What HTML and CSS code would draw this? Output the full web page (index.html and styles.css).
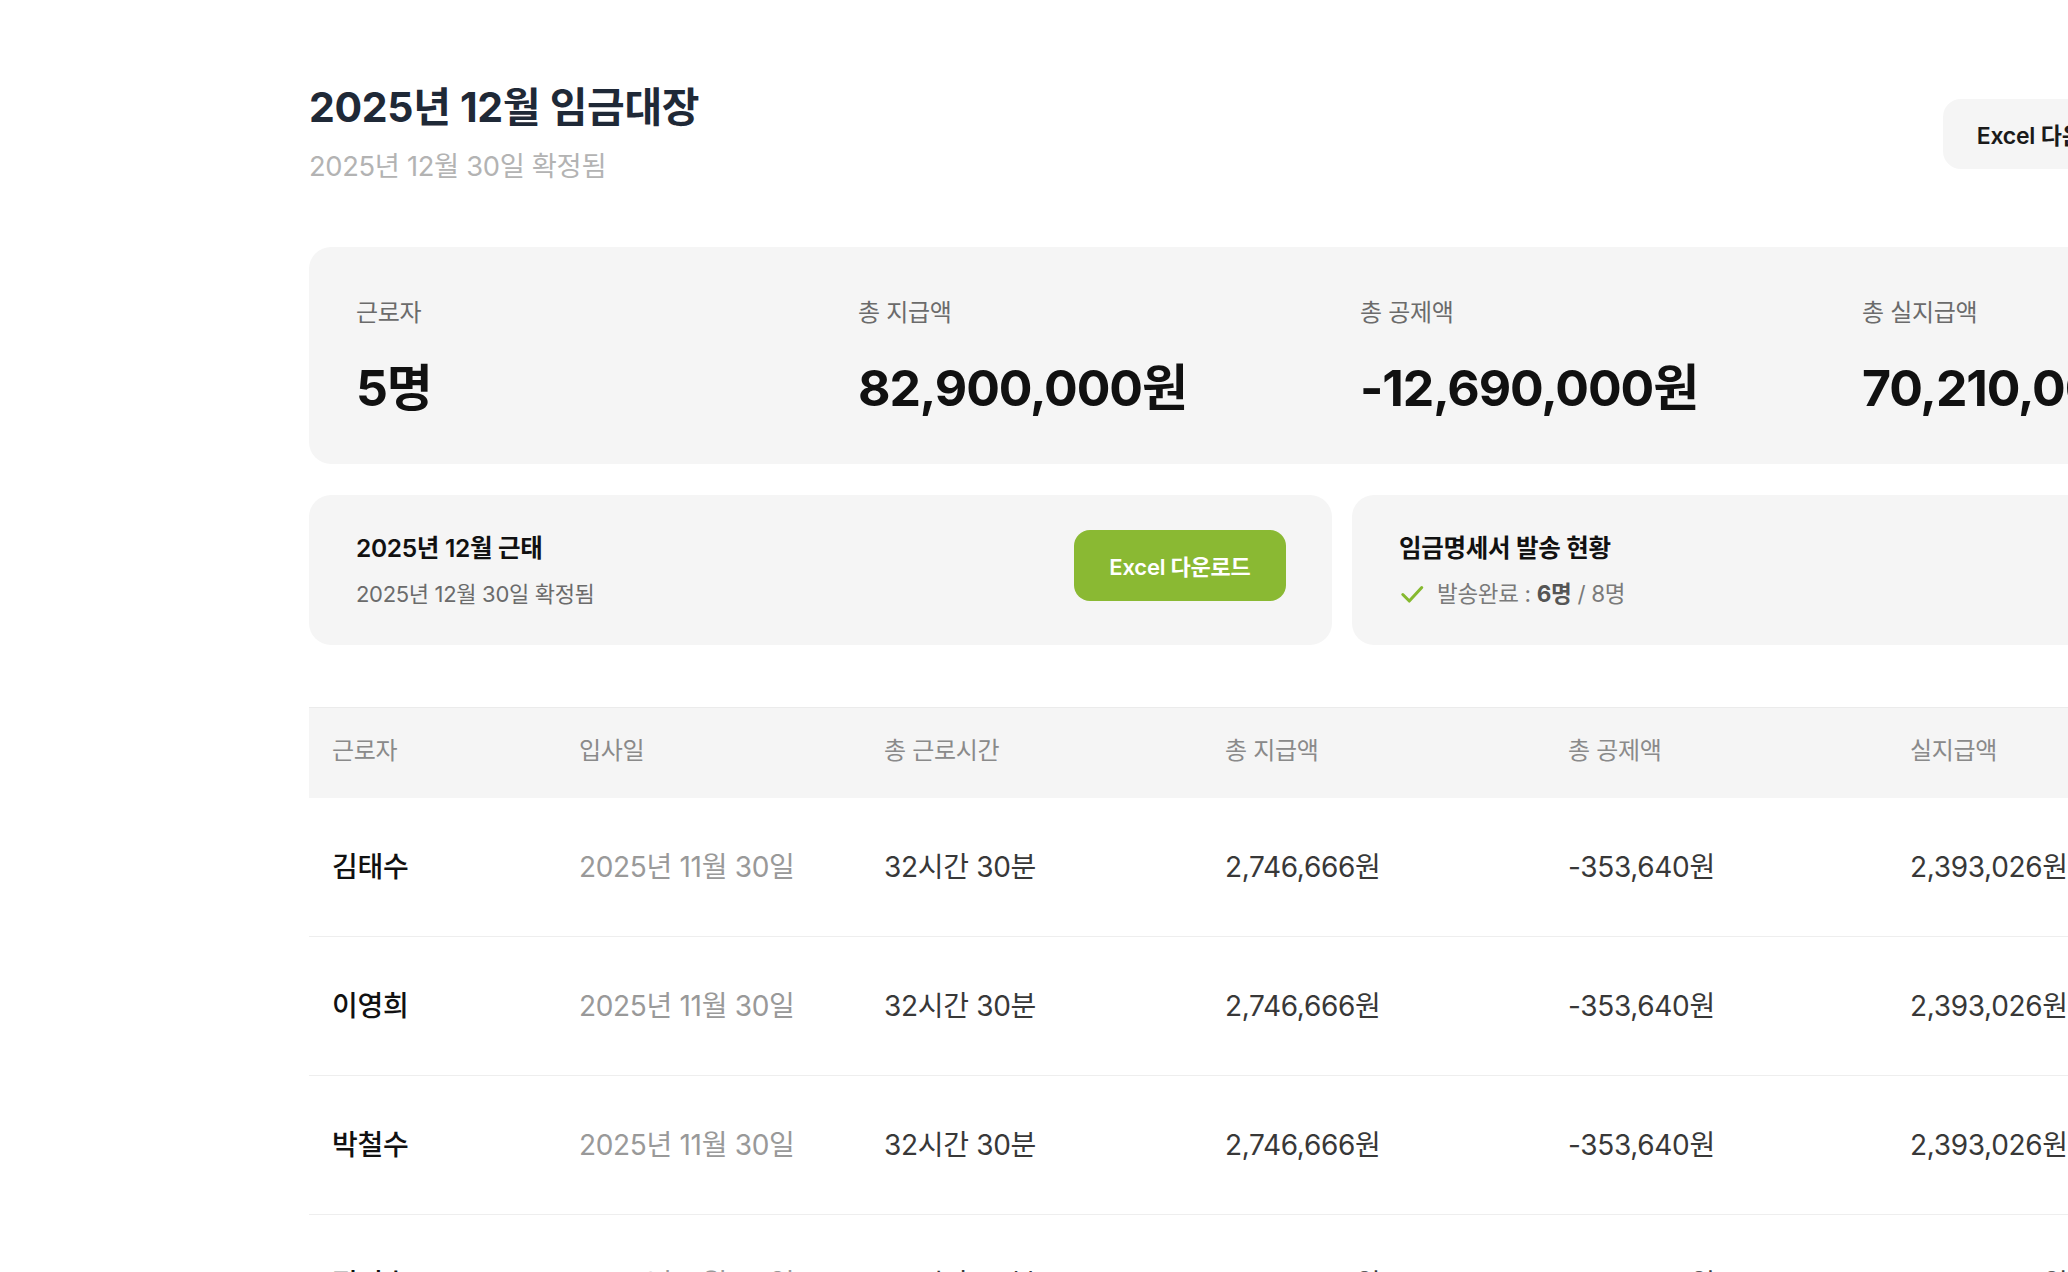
FILE: index.html
```html
<!DOCTYPE html>
<html lang="ko">
<head>
<meta charset="utf-8">
<title>2025년 12월 임금대장</title>
<link rel="stylesheet" href="styles.css">
</head>
<body>
<div class="page">
  <header class="page-header">
    <div class="title-block">
      <h1 class="title">2025년 12월 임금대장</h1>
      <p class="subtitle">2025년 12월 30일 확정됨</p>
    </div>
    <div class="actions">
      <button class="btn-light">Excel 다운로드</button>
      <button class="btn-light">PDF 다운로드</button>
    </div>
  </header>

  <section class="summary">
    <div class="stat">
      <div class="stat-label">근로자</div>
      <div class="stat-value">5명</div>
    </div>
    <div class="stat">
      <div class="stat-label">총 지급액</div>
      <div class="stat-value">82,900,000원</div>
    </div>
    <div class="stat">
      <div class="stat-label">총 공제액</div>
      <div class="stat-value">-12,690,000원</div>
    </div>
    <div class="stat">
      <div class="stat-label">총 실지급액</div>
      <div class="stat-value">70,210,000원</div>
    </div>
  </section>

  <div class="cards">
    <div class="card">
      <div class="card-text">
        <div class="card-title">2025년 12월 근태</div>
        <div class="card-sub">2025년 12월 30일 확정됨</div>
      </div>
      <button class="btn-green">Excel 다운로드</button>
    </div>
    <div class="card">
      <div class="card-text">
        <div class="card-title">임금명세서 발송 현황</div>
        <div class="card-status">
          <svg class="check" viewBox="0 0 24 24" width="26" height="26"><path d="M3.5 12.5 L9.5 18.5 L21 6" fill="none" stroke="#86b92f" stroke-width="2.8" stroke-linecap="round" stroke-linejoin="round"/></svg>
          <span>발송완료 : <b>6명</b> / 8명</span>
        </div>
      </div>
    </div>
  </div>

  <table class="ledger">
    <colgroup>
      <col class="c-name"><col class="c-date"><col class="c-hours"><col class="c-pay"><col class="c-ded"><col class="c-net">
    </colgroup>
    <thead>
      <tr><th>근로자</th><th>입사일</th><th>총 근로시간</th><th>총 지급액</th><th>총 공제액</th><th>실지급액</th></tr>
    </thead>
    <tbody>
      <tr><td class="name">김태수</td><td class="date">2025년 11월 30일</td><td>32시간 30분</td><td>2,746,666원</td><td>-353,640원</td><td>2,393,026원</td></tr>
      <tr><td class="name">이영희</td><td class="date">2025년 11월 30일</td><td>32시간 30분</td><td>2,746,666원</td><td>-353,640원</td><td>2,393,026원</td></tr>
      <tr><td class="name">박철수</td><td class="date">2025년 11월 30일</td><td>32시간 30분</td><td>2,746,666원</td><td>-353,640원</td><td>2,393,026원</td></tr>
      <tr><td class="name">정민호</td><td class="date">2025년 11월 30일</td><td>32시간 30분</td><td>2,746,666원</td><td>-353,640원</td><td>2,393,026원</td></tr>
      <tr><td class="name">최지은</td><td class="date">2025년 11월 30일</td><td>32시간 30분</td><td>2,746,666원</td><td>-353,640원</td><td>2,393,026원</td></tr>
    </tbody>
  </table>
</div>
</body>
</html>
```

FILE: styles.css
```css
html, body {
  margin: 0;
  padding: 0;
  background: #ffffff;
  overflow: hidden;
}
body {
  font-family: "Inter", "Noto Sans CJK KR", sans-serif;
  color: #111111;
  letter-spacing: -0.02em;
}
.page {
  width: 2066px;
  margin-left: 309px;
  padding-top: 79px;
}
.page-header {
  display: flex;
  align-items: center;
  justify-content: space-between;
}
.title {
  margin: 0;
  font-size: 41px;
  line-height: 56px;
  font-weight: 700;
  color: #1f2937;
}
.subtitle {
  margin: 14px 0 0;
  font-size: 27.3px;
  line-height: 36px;
  color: #b3b3b3;
}
.actions {
  display: flex;
  gap: 15px;
  margin-top: 4px;
}
.btn-light {
  font-family: inherit;
  letter-spacing: -0.01em;
  border: none;
  background: #f5f5f5;
  color: #1a1a1a;
  font-size: 23px;
  font-weight: 600;
  height: 70px;
  padding: 0 34px;
  border-radius: 18px;
}
.summary {
  margin-top: 62px;
  background: #f5f5f5;
  border-radius: 22px;
  padding: 49px 47px 46px;
  display: grid;
  grid-template-columns: repeat(4, 466px);
  column-gap: 36px;
}
.stat-label {
  font-size: 24px;
  line-height: 34px;
  color: #6b6b6b;
}
.stat-value {
  margin-top: 28px;
  font-size: 50px;
  line-height: 60px;
  font-weight: 700;
  color: #111111;
  letter-spacing: -0.022em;
}
.cards {
  margin-top: 31px;
  display: grid;
  grid-template-columns: 1023px 1023px;
  column-gap: 20px;
}
.card {
  background: #f5f5f5;
  border-radius: 22px;
  padding: 36px 46px 36px 47px;
  display: flex;
  align-items: center;
  justify-content: space-between;
}
.card-title {
  font-size: 24.5px;
  line-height: 34px;
  font-weight: 600;
  color: #111111;
}
.card-sub {
  margin-top: 14px;
  font-size: 22px;
  line-height: 30px;
  color: #6b6b6b;
}
.card-status {
  margin-top: 14px;
  display: flex;
  align-items: center;
  gap: 12px;
  font-size: 22.5px;
  line-height: 30px;
  color: #7a7a7a;
}
.card-status b {
  color: #555555;
  font-weight: 700;
}
.btn-green {
  font-family: inherit;
  letter-spacing: -0.01em;
  border: none;
  background: #8ab933;
  color: #ffffff;
  font-size: 22px;
  font-weight: 600;
  width: 212px;
  height: 71px;
  border-radius: 16px;
  margin-top: -10px;
}
.ledger {
  margin-top: 62px;
  width: 2066px;
  border-collapse: collapse;
  table-layout: fixed;
}
.c-name { width: 247px; }
.c-date { width: 305px; }
.c-hours { width: 341px; }
.c-pay { width: 343px; }
.c-ded { width: 342px; }
.ledger th {
  background: #f5f5f5;
  border-top: 1px solid #ebebeb;
  height: 80px;
  padding: 0 0 10px 23px;
  text-align: left;
  font-size: 24px;
  font-weight: 400;
  color: #8a8a8a;
}
.ledger td {
  height: 134px;
  padding: 0 0 4px 23px;
  border-bottom: 1px solid #eeeeee;
  font-size: 28px;
  color: #383838;
  white-space: nowrap;
}
.ledger td.name {
  color: #111111;
  font-weight: 500;
}
.ledger td.date {
  color: #999999;
}
```
